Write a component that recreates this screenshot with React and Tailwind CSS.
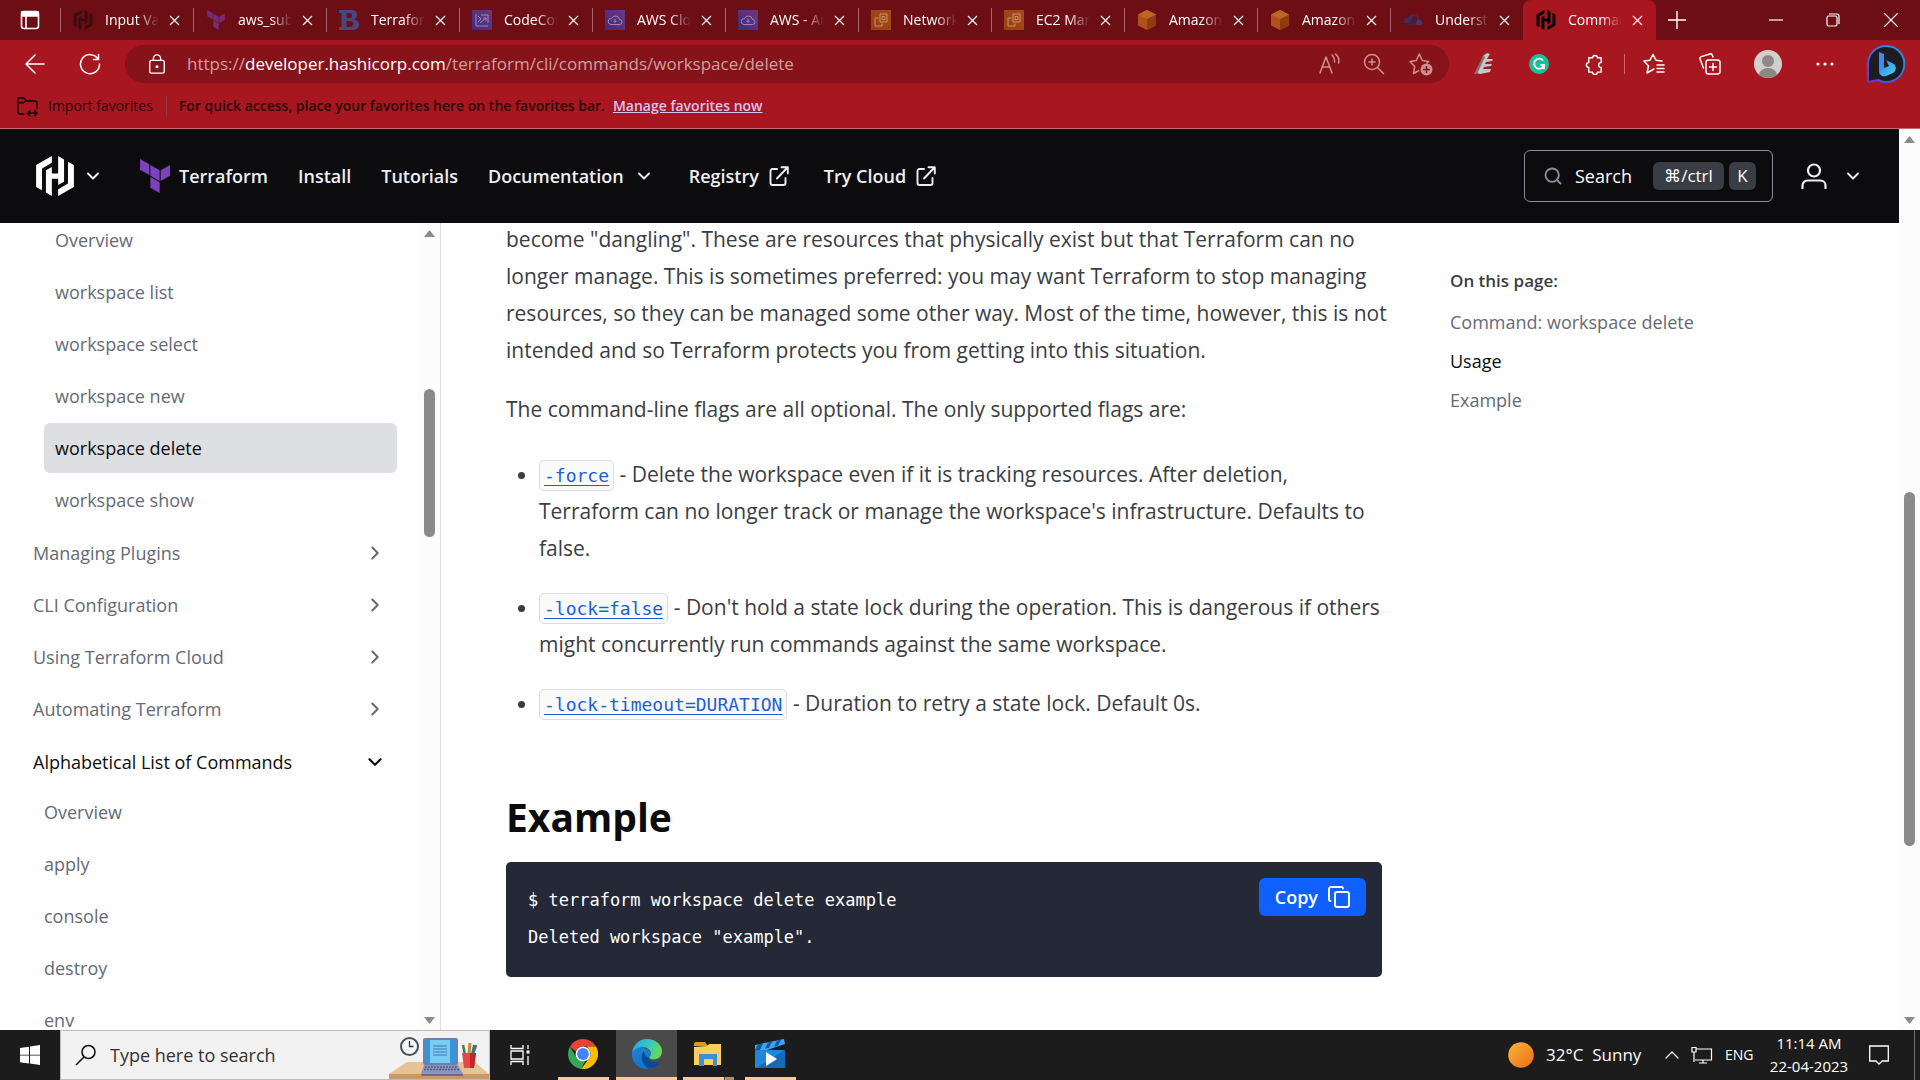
import React from "react";
import { SiHashicorp } from "react-icons/si";
import { ChevronDown, ChevronRight, ChevronUp, Search, X } from "lucide-react";

const UI = "font-['Open_Sans','Noto_Sans',sans-serif]";
const MONO = "font-['DejaVu_Sans_Mono',monospace]";

/* ---------- logos and small drawings ---------- */

function Terraform({ className }) {
  return (
    <svg viewBox="0 0 24 24" className={className} fill="#7b42bc" aria-hidden="true">
      <path d="M1.44 0v7.575l6.561 3.79V3.787zm21.12 4.227l-6.561 3.791v7.574l6.56-3.787zM8.72 4.23v7.575l6.561 3.787V8.018zm0 8.405v7.575L15.28 24v-7.578z" />
    </svg>
  );
}

function Tile({ from, to, children }) {
  return (
    <svg viewBox="0 0 20 20" className="size-5" fill="none" stroke="#a888b0" strokeWidth="1" aria-hidden="true">
      <defs>
        <linearGradient id={"t" + from.slice(1)} x1="0" y1="1" x2="1" y2="0">
          <stop stopColor={from} />
          <stop offset="1" stopColor={to} />
        </linearGradient>
      </defs>
      <rect width="20" height="20" fill={"url(#t" + from.slice(1) + ")"} stroke="none" />
      {children}
    </svg>
  );
}

const tabIcons = {
  hashi: <SiHashicorp className="size-5 text-[#3c0a10]" />,
  hashiActive: <SiHashicorp className="size-5 text-black" />,
  terraform: <Terraform className="size-5 opacity-60" />,
  b: (
    <svg viewBox="0 0 20 20" className="size-5" aria-hidden="true">
      <path fill="#47467f" fillRule="evenodd" d="M0 0h12c4 0 6 2 6 5 0 2-1 3.600-3 4.300 3 .6 5 2.300 5 5.200 0 3.500-2.500 5.500-7 5.500H0v-3h2.500V3H0zm7.500 3v5h3c1.800 0 2.700-.9 2.700-2.500S12.300 3 10.500 3zm0 8v6h3.600c2 0 3-1.100 3-3s-1-3-3-3z" />
    </svg>
  ),
  code: (
    <Tile from="#3e2a80" to="#6a3a80">
      <path d="M4 4v12h12M6 6l3 3-3 3M9 5h7v8M8 13l6-5M11 8h3v3" />
    </Tile>
  ),
  cloud: (
    <Tile from="#3f2a82" to="#6a3a7e">
      <path d="M6 14.500h8.500a2.500 2.500 0 0 0 0-5A4.200 4.200 0 0 0 6.500 8.500a3 3 0 0 0-.5 6zM10 9v3M8.500 11L10 12.500l1.500-1.500" />
    </Tile>
  ),
  ec2: (
    <Tile from="#98400f" to="#a34d1c">
      <path stroke="#cd9068" d="M9 4h7v8H9zM11 6.500h3v3h-3zM7.500 8H4v8h7v-2.500" />
    </Tile>
  ),
  box: (
    <svg viewBox="0 0 20 20" className="size-5" aria-hidden="true">
      <path fill="#b0501a" d="M10 0l9 4.500v11L10 20l-9-4.500v-11z" />
      <path fill="#923910" d="M10 9l9-4.500v11L10 20z" />
      <path fill="#bf6329" d="M10 0l9 4.500L10 9 1 4.500z" />
    </svg>
  ),
  blue: (
    <svg viewBox="0 0 20 20" className="size-5" aria-hidden="true">
      <path fill="#3e2b58" d="M4 8l5-4 3 1-5 8H2c-3-1-1-5 2-5z" />
      <path fill="#4a3566" d="M12 5c3 0 4 3 4 5 4 0 5 5 1 5h-5l3-7z" />
      <path fill="#352552" d="M4 14l5-1 5-7-3 9-5 1z" />
    </svg>
  ),
};

const tabs = [
  ["hashi", "Input Va"],
  ["terraform", "aws_subn"],
  ["b", "Terraform"],
  ["code", "CodeCon"],
  ["cloud", "AWS Clou"],
  ["cloud", "AWS - Am"],
  ["ec2", "Network"],
  ["ec2", "EC2 Man"],
  ["box", "Amazon"],
  ["box", "Amazon"],
  ["blue", "Underst"],
  ["hashiActive", "Comman"],
];

function Tab({ icon, label, active, sep }) {
  return (
    <div
      className={
        "flex h-10 min-w-0 w-[133px] items-center pl-[13px] " +
        (active ? "rounded-t-lg bg-[#a8171f]" : "")
      }
    >
      {sep && <span className="-ml-[13px] mr-3 h-6 w-px bg-[#a8686c]" />}
      <button className="flex min-w-0 flex-1 items-center gap-3 text-left">
        <span className="shrink-0">{tabIcons[icon]}</span>
        <span className="w-[54px] overflow-hidden whitespace-nowrap text-sm text-white [mask-image:linear-gradient(to_right,black_60%,transparent)]">
          {label}
        </span>
      </button>
      <button aria-label={"Close " + label} className="mr-[9px] flex size-5 items-center justify-center text-white">
        <X className="size-[17px]" strokeWidth={1.6} />
      </button>
    </div>
  );
}

function TabBar() {
  return (
    <div className="flex h-10 shrink-0 items-center bg-[#6d0e15]">
      <button aria-label="Tab actions" className="flex w-[60px] shrink-0 justify-center text-white">
        <svg viewBox="0 0 20 20" className="size-5" fill="none" stroke="currentColor" strokeWidth="1.600">
          <rect x="1.500" y="1.500" width="17" height="17" rx="2.500" />
          <path fill="currentColor" d="M2 2h16v4H2z" />
          <path d="M6 6v12" />
        </svg>
      </button>
      {tabs.map(([icon, label], i) => (
        <Tab key={i} icon={icon} label={label} active={i === 11} sep={i !== 11} />
      ))}
      <button aria-label="New tab" className="ml-[7px] flex size-7 items-center justify-center text-white">
        <svg viewBox="0 0 18 18" className="size-[18px]" stroke="currentColor" strokeWidth="1.400">
          <path d="M9 0v18M0 9h18" />
        </svg>
      </button>
      <div className="ml-auto flex text-white">
        <button aria-label="Minimize" className="flex h-10 w-[57px] items-center justify-center">
          <svg viewBox="0 0 14 14" className="size-3.5" stroke="currentColor" strokeWidth="1.200"><path d="M0 7h14" /></svg>
        </button>
        <button aria-label="Restore" className="flex h-10 w-[58px] items-center justify-center">
          <svg viewBox="0 0 14 14" className="size-3.5" fill="none" stroke="currentColor" strokeWidth="1.200">
            <rect x="1" y="3" width="10" height="10" rx="1.500" />
            <path d="M3 1h8a2 2 0 0 1 2 2v8" />
          </svg>
        </button>
        <button aria-label="Close window" className="flex h-10 w-[58px] items-center justify-center">
          <svg viewBox="0 0 14 14" className="size-3.5" stroke="currentColor" strokeWidth="1.200"><path d="M0 0l14 14M14 0L0 14" /></svg>
        </button>
      </div>
    </div>
  );
}

function Line({ children, className = "size-[22px]", sw = 1.5 }) {
  return (
    <svg viewBox="0 0 22 22" className={className} fill="none" stroke="currentColor" strokeWidth={sw} strokeLinecap="round" strokeLinejoin="round" aria-hidden="true">
      {children}
    </svg>
  );
}

function IconButton({ label, width, children }) {
  return (
    <button aria-label={label} className={"flex shrink-0 items-center justify-center " + width}>
      {children}
    </button>
  );
}

function Toolbar() {
  return (
    <div className="flex h-[46px] shrink-0 items-center bg-[#a8171f] pt-0.5 text-white">
      <div className="flex w-[125px] shrink-0 items-center pl-2">
        <IconButton label="Back" width="w-[54px]"><Line><path d="M20 11H2M11 2l-9 9 9 9" /></Line></IconButton>
        <IconButton label="Refresh" width="w-[56px]"><Line><path d="M19 6a9.500 9.500 0 1 0 1.500 5M19.500 1.500V6.500H14.500" /></Line></IconButton>
      </div>
      <div className="flex h-[38px] min-w-0 flex-1 items-center rounded-full bg-[#87131a] pl-[22px]">
        <Line className="size-5">
          <rect x="3" y="7" width="16" height="14" rx="2" />
          <path d="M7 7V5a4 4 0 0 1 8 0v2" />
          <circle cx="11" cy="14" r="1" fill="currentColor" />
        </Line>
        <div role="textbox" aria-label="Address" className="ml-5 min-w-0 flex-1 truncate text-[17px] leading-8 text-[#cf9fa2]">
          https://<span className="text-white">developer.hashicorp.com</span>/terraform/cli/commands/workspace/delete
        </div>
        <div className="flex items-center pr-1 text-[#cf8f92]">
          <IconButton label="Read aloud" width="w-11">
            <Line><path d="M2 20L8 4l6 16M4 14h8M14 2c2 2 3 4 2.500 7M17.500 1c3 2.500 4 6 3 9" /></Line>
          </IconButton>
          <IconButton label="Zoom" width="w-[46px]">
            <Line><circle cx="9" cy="9" r="7.500" /><path d="M14.500 14.500l6 6M6 9h6M9 6v6" /></Line>
          </IconButton>
          <IconButton label="Add to favorites" width="w-12">
            <svg viewBox="0 0 24 24" className="size-6" fill="none" stroke="currentColor" strokeWidth="1.500" strokeLinejoin="round">
              <path d="M10 18.500l-5.500 3 1.200-7L1 9.500l6.300-1L10.300 2l3 6.500 6.300 1-2 2" />
              <circle cx="17.500" cy="17.500" r="6" fill="currentColor" stroke="none" />
              <path stroke="#87131a" d="M17.500 14v7M14 17.500h7" />
            </svg>
          </IconButton>
        </div>
      </div>
      <div className="flex shrink-0 items-center pl-2">
        <IconButton label="Editor" width="w-[54px]">
          <svg viewBox="0 0 20 22" className="h-[22px] w-5">
            <path fill="#c9c4c4" d="M9 3l4-3 3 1-3 5h6l-1 2-6 1-1 2h7l-1 2-7 1-1 2h8l-1 3-10 2-3-1z" />
            <path fill="#777" d="M0 21L9 3l2 1L3 21z" />
          </svg>
        </IconButton>
        <IconButton label="Grammarly" width="w-14">
          <svg viewBox="0 0 20 20" className="size-5">
            <circle cx="10" cy="10" r="10" fill="#15c39a" />
            <path fill="none" stroke="#fff" strokeWidth="1.800" d="M14 6.500A5 5 0 1 0 15 11h-3.500M15 11v4" />
          </svg>
        </IconButton>
        <IconButton label="Extensions" width="w-[54px]">
          <Line className="size-[21px]"><path d="M5 4h4a2.500 2.500 0 0 1 5 0h4v5c-3.500-.5-3.500 5.500 0 5v5h-4a2.500 2.500 0 0 1-5 0H5v-5a2.500 2.500 0 0 1 0-5z" /></Line>
        </IconButton>
        <span className="ml-[3px] h-5 w-px bg-[#c9666b]" />
        <IconButton label="Favorites" width="w-[58px]">
          <Line><path d="M11 16l-7 4 1.500-7L1 8l6-.8L10 1.500l3 5.700 6 .8M14 12h7M14 15.500h7M14 19h7" /></Line>
        </IconButton>
        <IconButton label="Collections" width="w-[54px]">
          <Line><rect x="7" y="7" width="14" height="14" rx="2.500" /><path d="M14 10.500v7M10.500 14h7M4.500 15L1 6c-.4-1 .2-2 1.200-2.400L11 1c1-.3 2 .2 2.400 1.200L14 4" /></Line>
        </IconButton>
        <IconButton label="Profile" width="w-[61px]">
          <svg viewBox="0 0 28 28" className="size-7">
            <clipPath id="av"><circle cx="14" cy="14" r="14" /></clipPath>
            <g clipPath="url(#av)">
              <rect width="28" height="28" fill="#d2cfcc" />
              <circle cx="14" cy="11" r="6" fill="#8b8885" />
              <ellipse cx="14" cy="25" rx="9" ry="7" fill="#8b8885" />
            </g>
          </svg>
        </IconButton>
        <IconButton label="Settings" width="w-[54px]">
          <svg viewBox="0 0 18 4" className="h-1 w-[18px]" fill="currentColor"><circle cx="2" cy="2" r="1.600" /><circle cx="9" cy="2" r="1.600" /><circle cx="16" cy="2" r="1.600" /></svg>
        </IconButton>
        <IconButton label="Bing" width="w-[68px]">
          <svg viewBox="0 0 40 40" className="size-10">
            <defs>
              <linearGradient id="bg1" x1="1" y1="0" x2="0" y2="1"><stop stopColor="#1b9de2" /><stop offset="1" stopColor="#5a3bd0" /></linearGradient>
              <linearGradient id="bg2" x1="0" y1="0" x2="1" y2="1"><stop stopColor="#2f7df0" /><stop offset="1" stopColor="#46d4f2" /></linearGradient>
            </defs>
            <path d="M20 2a18 18 0 1 1-8 34l-10 2V20A18 18 0 0 1 20 2z" fill="#1c1c22" stroke="url(#bg1)" strokeWidth="2" />
            <path d="M13 8l5 2v15l-5 4z" fill="#3d8bf5" />
            <path d="M13 28l5-4 5-2-3-6 8 4c3 3 2 7-1 9l-7 3c-3 1-6 0-7-4z" fill="url(#bg2)" />
          </svg>
        </IconButton>
      </div>
    </div>
  );
}

function FavoritesBar() {
  return (
    <div className="flex h-[43px] shrink-0 items-center border-b border-[#c06a6e] bg-[#a8171f] pb-0.5 pl-[17px] text-sm text-[#2b0508]">
      <button className="flex items-center gap-2.5">
        <Line className="size-[21px]" sw={1.8}>
          <path d="M7 19H4a3 3 0 0 1-3-3V3.500A1.500 1.500 0 0 1 2.500 2H7l2.500 3H18a3 3 0 0 1 3 3v5M1 7h6l2.500-2M11 18h10M13.500 15.500L11 18l2.500 2.500M18.500 15.500L21 18l-2.500 2.500" />
        </Line>
        Import favorites
      </button>
      <span className="ml-[13px] h-5 w-px bg-[#8c3c40]" />
      <span className="ml-3 font-semibold">For quick access, place your favorites here on the favorites bar.</span>
      <a href="#manage" className="ml-2 font-semibold text-[#d9c3f0] underline">Manage favorites now</a>
    </div>
  );
}

function External() {
  return (
    <svg viewBox="0 0 20 20" className="size-5" fill="none" stroke="currentColor" strokeWidth="1.900" strokeLinecap="round" strokeLinejoin="round" aria-hidden="true">
      <path d="M8 3H3.500A2 2 0 0 0 1.500 5v12a2 2 0 0 0 2 2h11a2 2 0 0 0 2-2v-5M8 12.500L18.500 1.500M12.500 1.200h6.300v6.300" />
    </svg>
  );
}

function SiteHeader() {
  return (
    <header className="flex h-[94px] shrink-0 items-center bg-[#0c0c0e] pl-[35px] pr-9 text-lg font-semibold text-[#efeff1]">
      <button aria-label="HashiCorp products" className="flex items-center gap-2 text-white">
        <SiHashicorp className="size-10" />
        <ChevronDown className="size-5" strokeWidth={2.2} />
      </button>
      <nav className="ml-[35px] flex items-center gap-[30px]">
        <a href="#terraform" className="flex items-center gap-[7px]">
          <Terraform className="size-[34px]" />
          Terraform
        </a>
        <a href="#install">Install</a>
        <a href="#tutorials">Tutorials</a>
        <button className="flex items-center gap-2.5">Documentation<ChevronDown className="size-5" strokeWidth={2.2} /></button>
        <a href="#registry" className="ml-[5px] flex items-center gap-2.5">Registry<External /></a>
        <a href="#cloud" className="ml-[5px] flex items-center gap-2.5">Try Cloud<External /></a>
      </nav>
      <button className="ml-auto flex h-[52px] w-[249px] items-center rounded-md border border-[#8c909c] pl-[18px] text-lg font-normal text-white">
        <Search className="mr-3 size-5 text-[#8c909c]" strokeWidth={2.2} />
        Search
        <span className="ml-auto mr-4 flex gap-[5px] text-[17px] font-medium">
          <kbd className={"flex h-7 w-[71px] items-center justify-center rounded-md bg-[#3b3d45] " + UI}>⌘/ctrl</kbd>
          <kbd className={"flex h-7 w-[27px] items-center justify-center rounded-md bg-[#3b3d45] " + UI}>K</kbd>
        </span>
      </button>
      <button aria-label="Account" className="ml-7 flex items-center gap-4">
        <svg viewBox="0 0 26 26" className="size-[26px]" fill="none" stroke="currentColor" strokeWidth="2.200" strokeLinecap="round">
          <circle cx="13" cy="7.500" r="6" />
          <path d="M1.500 25v-2.500a5 5 0 0 1 5-5h13a5 5 0 0 1 5 5V25" />
        </svg>
        <ChevronDown className="size-5" strokeWidth={2.2} />
      </button>
    </header>
  );
}

function Scrollbar({ spacer, thumb, width }) {
  return (
    <div aria-hidden="true" className={"flex shrink-0 flex-col items-center bg-[#fcfcfc] pb-1.5 pt-[7px] " + width}>
      <svg viewBox="0 0 11 7" className="h-[7px] w-[11px]" fill="#8a8a8a"><path d="M5.500 0L11 7H0z" /></svg>
      <div className={spacer} />
      <div className={"w-[11px] rounded-full bg-[#8a8a8a] " + thumb} />
      <svg viewBox="0 0 11 7" className="mt-auto h-[7px] w-[11px]" fill="#8a8a8a"><path d="M0 0h11L5.500 7z" /></svg>
    </div>
  );
}

const workspaceItems = ["Overview", "workspace list", "workspace select", "workspace new", "workspace delete", "workspace show"];
const groups = ["Managing Plugins", "CLI Configuration", "Using Terraform Cloud", "Automating Terraform"];
const commands = ["Overview", "apply", "console", "destroy", "env"];

function Sidebar() {
  return (
    <aside className="flex w-[441px] shrink-0 overflow-hidden border-r border-[#dcdde0]">
      <nav className="-mt-2 min-w-0 flex-1 pl-[33px] pr-[21px] text-lg text-[#656a76]">
        <ul className="flex flex-col gap-0.5 pl-[11px]">
          {workspaceItems.map((t) => (
            <li key={t}>
              <a
                href="#ws"
                className={
                  "flex h-[50px] items-center rounded-md pl-[11px] " +
                  (t === "workspace delete" ? "bg-[#dedfe3] text-[#0c0c0e]" : "")
                }
              >
                {t}
              </a>
            </li>
          ))}
        </ul>
        <div className="mt-[3px] flex flex-col gap-0.5">
          {groups.map((t) => (
            <button key={t} className="flex h-[50px] items-center justify-between pr-[11px]">
              {t}
              <ChevronRight className="size-[22px]" strokeWidth={2.2} />
            </button>
          ))}
          <button className="flex h-[51px] items-center justify-between pr-[11px] text-[#0c0c0e]">
            Alphabetical List of Commands
            <ChevronDown className="size-[22px]" strokeWidth={2.4} />
          </button>
        </div>
        <ul className="flex flex-col gap-0.5 pl-[11px]">
          {commands.map((t) => (
            <li key={t}><a href="#cmd" className="flex h-[50px] items-center">{t}</a></li>
          ))}
        </ul>
      </nav>
      <Scrollbar spacer="h-[152px]" thumb="h-[148px]" width="w-[22px]" />
    </aside>
  );
}

function Flag({ children }) {
  return (
    <a href="#flag" className={"rounded-[5px] border border-[#dcdde0] bg-[#fafafa] px-1 py-1 text-lg text-[#1c5fd6] underline underline-offset-[3px] " + MONO}>
      {children}
    </a>
  );
}

function Article() {
  return (
    <main className="flex min-w-0 flex-1 overflow-hidden bg-white">
      <article className="-mt-0.5 ml-[65px] w-[896px] text-[21px] leading-[37px] text-[#3b3d45]">
        <p>
          become "dangling". These are resources that physically exist but that Terraform can no longer manage. This is
          sometimes preferred: you may want Terraform to stop managing resources, so they can be managed some other way.
          Most of the time, however, this is not intended and so Terraform protects you from getting into this situation.
        </p>
        <p className="mt-[22px]">The command-line flags are all optional. The only supported flags are:</p>
        <ul className="mr-4 mt-7 flex list-disc flex-col gap-[22px] pl-[33px]">
          <li>
            <Flag>-force</Flag> - Delete the workspace even if it is tracking resources. After deletion, Terraform can no
            longer track or manage the workspace's infrastructure. Defaults to false.
          </li>
          <li>
            <Flag>-lock=false</Flag> - Don't hold a state lock during the operation. This is dangerous if others might
            concurrently run commands against the same workspace.
          </li>
          <li>
            <Flag>-lock-timeout=DURATION</Flag> - Duration to retry a state lock. Default 0s.
          </li>
        </ul>
        <h2 className="mt-[70px] text-[39px] font-bold leading-[50px] text-[#0c0c0e]">Example</h2>
        <div className="mr-5 mt-5 flex h-[115px] items-start justify-between rounded-[5px] bg-[#252937] pl-[22px] pr-4 pt-4 text-white">
          <pre className={"pt-1 text-[17px] leading-[37px] " + MONO}>
            {'$ terraform workspace delete example\nDeleted workspace "example".'}
          </pre>
          <button className="flex h-[38px] items-center gap-2.5 rounded-md bg-[#1060ff] px-4 text-lg font-semibold">
            Copy
            <svg viewBox="0 0 22 22" className="size-[22px]" fill="none" stroke="currentColor" strokeWidth="1.900" strokeLinecap="round" strokeLinejoin="round" aria-hidden="true">
              <rect x="7" y="6" width="14" height="15" rx="2" />
              <path d="M2.500 15A1.500 1.500 0 0 1 1 13.500V3a2 2 0 0 1 2-2h10.500A1.500 1.500 0 0 1 15 2.500" />
            </svg>
          </button>
        </div>
      </article>
      <aside className="ml-12 flex min-w-0 flex-1 flex-col gap-3 pt-[44px] text-lg leading-[27px] text-[#656a76]">
        <h3 className="text-[17px] font-semibold text-[#3b3d45]">On this page:</h3>
        <a href="#top" className="mt-[3px]">Command: workspace delete</a>
        <a href="#usage" className="text-[#0c0c0e]">Usage</a>
        <a href="#example">Example</a>
      </aside>
    </main>
  );
}

/* ---------- taskbar ---------- */

function DeskArt() {
  return (
    <svg viewBox="0 0 100 48" className="h-12 w-[100px]" aria-hidden="true">
      <path d="M0 43L18 31h68l14 12z" fill="#e6c296" />
      <path d="M0 43h100v5H0z" fill="#c99a64" />
      <circle cx="20.500" cy="15.500" r="8.500" fill="#f7f7f9" stroke="#4b4f5c" strokeWidth="2" />
      <path d="M20.500 10v5.500h4" stroke="#333" strokeWidth="1.300" fill="none" />
      <rect x="34" y="7" width="35" height="27" rx="2" fill="#6d7fb0" />
      <rect x="36" y="9" width="31" height="23" fill="#3597d8" />
      <rect x="41" y="9" width="20" height="23" fill="#7ccbf5" />
      <path d="M44 15h14M44 18h14M44 21h14M44 24h14" stroke="#3a74b8" strokeWidth="1" />
      <path d="M35 34h34l5 9H32z" fill="#8d94bd" />
      <path d="M36 36h32M35 38.500h35" stroke="#555c88" strokeWidth="1.300" strokeDasharray="2 1" />
      <path d="M32 43h42v2H33z" fill="#646b97" />
      <path d="M76 24l-2-10M84 23l3-9" stroke="#467a4e" strokeWidth="2.500" />
      <path d="M80 23l1-11" stroke="#c98a28" strokeWidth="3" />
      <path d="M83 23l2-9" stroke="#2f6cc0" strokeWidth="2" />
      <path d="M73 22h14l-2 15H75z" fill="#e8454a" />
      <path d="M81 22h6l-2 15h-4z" fill="#bf272f" />
    </svg>
  );
}

function TaskApp({ label, width, bar, active, extra, children }) {
  return (
    <button aria-label={label} className={"flex h-[50px] shrink-0 flex-col items-center " + width + (active ? " bg-[#4a4a4a]" : "")}>
      <span className="flex flex-1 items-center">{children}</span>
      <span className={"flex h-[3px] justify-end bg-[#fac995] " + bar}>
        {extra && <span className="w-2.5 border-l border-[#5c4a38] bg-[#b08e6b]" />}
      </span>
    </button>
  );
}

function Taskbar() {
  return (
    <footer className="flex h-[50px] shrink-0 items-center bg-[#1c1c1c] text-white">
      <button aria-label="Start" className="flex w-[60px] justify-center">
        <svg viewBox="0 0 20 20" className="size-5" fill="#fff">
          <path d="M0 3l9-1.300v8H0zM10 1.500L20 0v9.700H10zM0 10.600h9v8L0 17.300zM10 10.600h10V20l-10-1.400z" />
        </svg>
      </button>
      <label className="flex h-[50px] w-[430px] items-center border border-[#bdbdbd] bg-[#f2f2f2] pl-3.5">
        <svg viewBox="0 0 22 22" className="size-[22px] shrink-0" fill="none" stroke="#111" strokeWidth="1.600">
          <circle cx="13.500" cy="8" r="6.500" />
          <path d="M9 13L1 21" />
        </svg>
        <input aria-label="Search" placeholder="Type here to search" className="ml-[13px] min-w-0 flex-1 bg-transparent text-lg text-[#222] outline-none placeholder:text-[#333]" />
        <DeskArt />
      </label>
      <button aria-label="Task view" className="flex w-[60px] justify-center">
        <svg viewBox="0 0 20 20" className="size-5" fill="none" stroke="#fff" strokeWidth="1.300">
          <path d="M1 0v3.500h12V0M1 6h12v8H1zM1 20v-3.500h12V20M18 0v4M18 11v9" />
          <path d="M18 5.500v3" strokeWidth="3" />
        </svg>
      </button>
      <TaskApp label="Chrome" width="w-[66px]" bar="w-[51px]">
        <svg viewBox="0 0 48 48" className="size-[30px]">
          <path fill="#ea4335" d="M24 0a24 24 0 0 1 20.800 12H24a12 12 0 0 0-11.400 8.200L3.200 12A24 24 0 0 1 24 0z" />
          <path fill="#34a853" d="M3.200 12l10.400 18A12 12 0 0 0 24 36l3.400-.4L21 47.800A24 24 0 0 1 3.200 12z" />
          <path fill="#fbbc04" d="M44.800 12A24 24 0 0 1 21 47.800L34.400 30A12 12 0 0 0 33 16l-3-4z" />
          <circle cx="24" cy="24" r="12" fill="#fff" />
          <circle cx="24" cy="24" r="9.500" fill="#4285f4" />
        </svg>
      </TaskApp>
      <TaskApp label="Edge" width="w-[61px]" bar="w-full" active>
        <svg viewBox="0 0 30 30" className="size-[30px]">
          <defs>
            <linearGradient id="e1" x1="0" y1="0" x2="1" y2="0.300"><stop stopColor="#2aa5e0" /><stop offset=".6" stopColor="#37c9c0" /><stop offset="1" stopColor="#5fdc56" /></linearGradient>
            <linearGradient id="e2" x1="0" y1="0" x2="0.500" y2="1"><stop stopColor="#1b83d8" /><stop offset="1" stopColor="#1173c4" /></linearGradient>
          </defs>
          <path fill="url(#e2)" d="M0 15C0 6 8 8 12 9c4 1 7 4 7 6 0 1-2 2-2 4 0 3 5 5 9 3.500 1-.4 2-.5 2 .5A15 15 0 0 1 0 15z" />
          <path fill="#0d4a94" d="M12 12c-4 4-3 13 5 17.700 5-.6 9-3 11-6.700 0-1-1-.9-2-.5-4 1.500-9-.5-9-3.500-3-1-5-4-5-7z" />
          <path fill="url(#e1)" d="M.2 14A15 15 0 0 1 15 0c9 0 15 6 15 12.500 0 5-4 8-9 8-2 0-4-1-3.500-2.500 0-1 1.500-1.500 1.500-3.500C19 11 15 8 10.500 8 5 8 1 11 .2 14z" />
        </svg>
      </TaskApp>
      <TaskApp label="File Explorer" width="w-[62px]" bar="w-[51px]" extra>
        <svg viewBox="0 0 28 24" className="h-6 w-7">
          <path fill="#d99a1e" d="M0 2a2 2 0 0 1 2-2h9l3 4H0z" />
          <path fill="#f9cf5f" d="M0 5l13-1 2-2h12v21H0z" />
          <path fill="#3f8fd8" d="M5 12h18v12h-4v-7h-9v7H5z" />
        </svg>
      </TaskApp>
      <TaskApp label="Movies & TV" width="w-[62px]" bar="w-[51px]">
        <svg viewBox="0 0 32 32" className="size-8">
          <path fill="#3ba6ee" d="M1 7L30 1l1 5-18 6H1z" />
          <path fill="#1457a8" d="M4 6.500l5-1-3 6.500H1zM14 4.500l4-.8-3 6-4 1zM23 2.500l4-.8-3 6-4 1z" />
          <rect x="1" y="12" width="30" height="18" rx="1" fill="#1f86d9" />
          <path fill="#1258a5" d="M31 12v18H2z" opacity=".6" />
          <path fill="#fff" d="M12 14l11 7-11 7z" />
        </svg>
      </TaskApp>
      <div className="ml-auto flex h-full items-center">
        <svg viewBox="0 0 26 26" className="size-[26px]">
          <defs><linearGradient id="sun" x1="0" y1="0" x2="1" y2="1"><stop stopColor="#f5b93a" /><stop offset="1" stopColor="#f06a14" /></linearGradient></defs>
          <circle cx="13" cy="13" r="12.800" fill="url(#sun)" />
        </svg>
        <span className="ml-3 w-[114px] whitespace-pre text-[17px] leading-6">32°C  Sunny</span>
        <ChevronUp className="size-6" strokeWidth={1.3} />
        <svg viewBox="0 0 22 18" className="ml-[7px] h-[18px] w-[22px]" fill="none" stroke="#fff" strokeWidth="1.200">
          <path d="M5 3h15.500v11H4M12 14v3M8 17h8M3 6v10M1 1.500h4V6H1z" />
        </svg>
        <span className="ml-3 w-[34px] text-sm">ENG</span>
        <div className="ml-2 w-[84px] text-center text-[15px] leading-[23px]"><div>11:14 AM</div><div>22-04-2023</div></div>
        <svg viewBox="0 0 20 20" className="ml-[18px] size-5" fill="none" stroke="#fff" strokeWidth="1.300">
          <path d="M.7 1h18.600v15h-6L10 19l-3-3H.7z" />
        </svg>
        <span className="ml-[25px] mr-[5px] h-full w-px bg-[#6b6b6b]" />
      </div>
    </footer>
  );
}

export default function App() {
  return (
    <div className={"flex h-screen flex-col overflow-hidden bg-white " + UI}>
      <TabBar />
      <Toolbar />
      <FavoritesBar />
      <div className="flex min-h-0 flex-1">
        <div className="flex min-w-0 flex-1 flex-col">
          <SiteHeader />
          <div className="flex min-h-0 flex-1">
            <Sidebar />
            <Article />
          </div>
        </div>
        <Scrollbar spacer="h-[349px]" thumb="h-[354px]" width="w-[21px]" />
      </div>
      <Taskbar />
    </div>
  );
}
